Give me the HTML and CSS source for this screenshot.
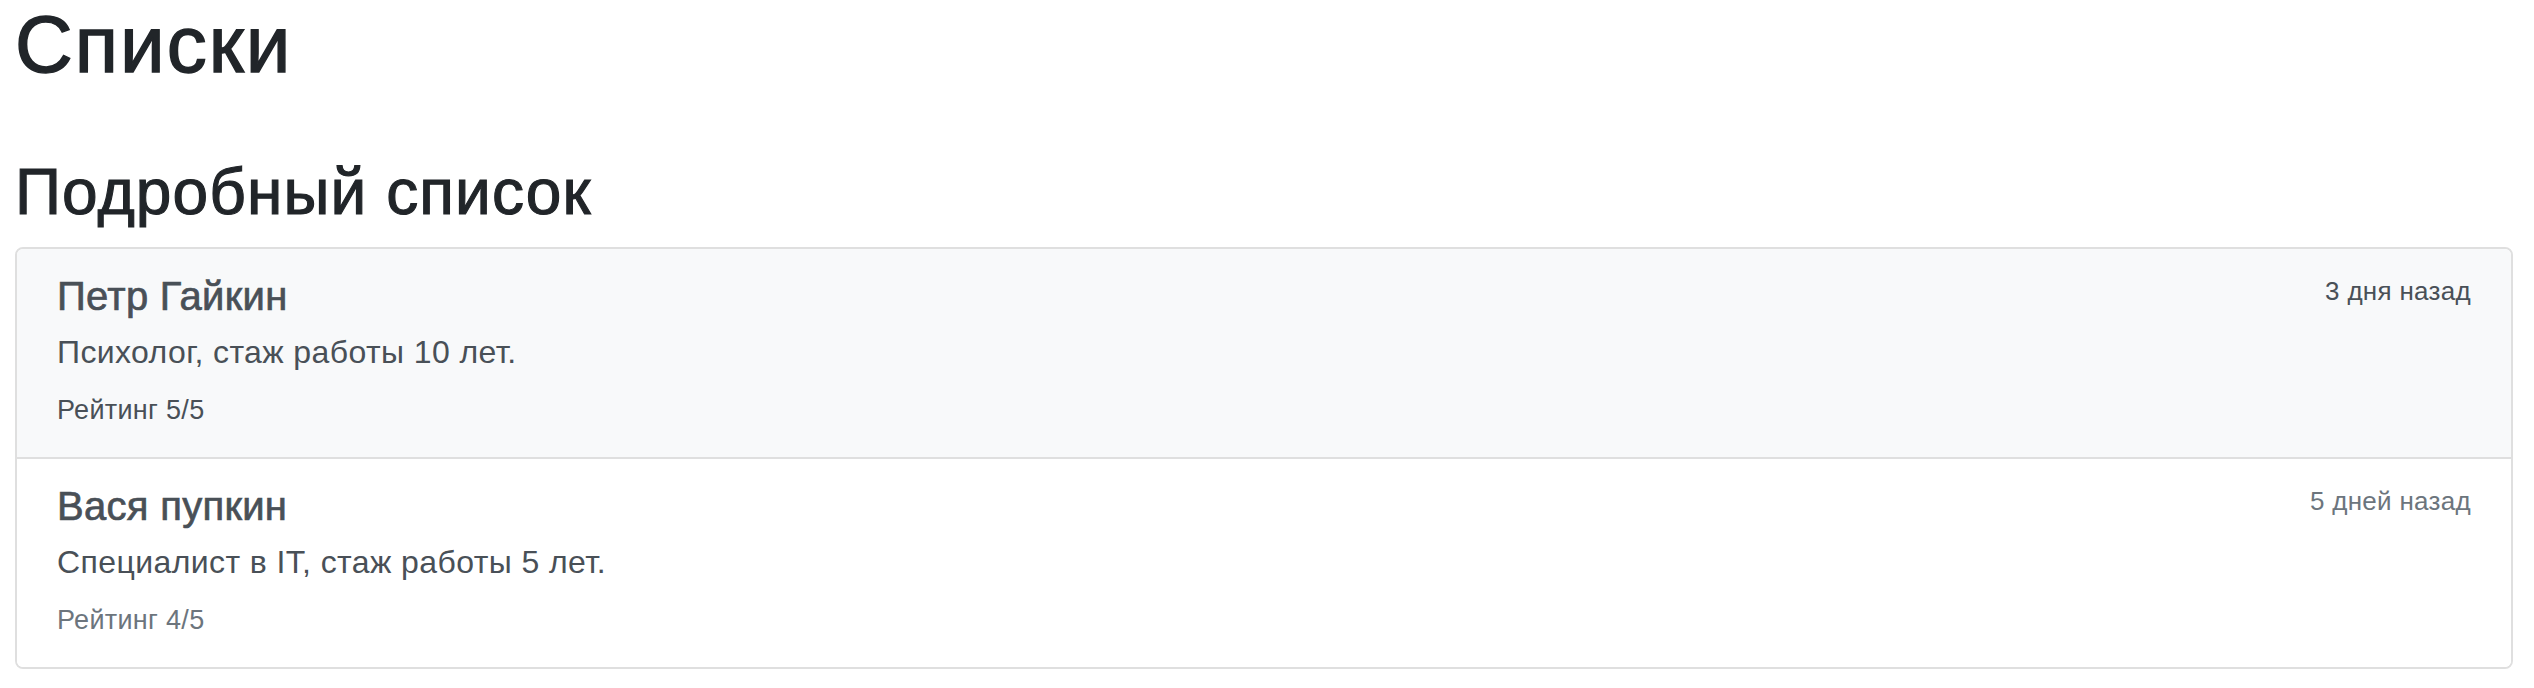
FILE: index.html
```html
<!DOCTYPE html>
<html lang="ru">
<head>
<meta charset="utf-8">
<title>Списки</title>
<link rel="stylesheet" href="styles.css">
</head>
<body>
<h1 class="title">Списки</h1>
<h2 class="subtitle">Подробный список</h2>
<div class="list-group">
  <a href="#" class="list-item list-item-hover">
    <div class="item-head">
      <h5 class="item-name">Петр Гайкин</h5>
      <small class="item-date">3 дня назад</small>
    </div>
    <p class="item-text">Психолог, стаж работы 10 лет.</p>
    <small class="item-rating">Рейтинг 5/5</small>
  </a>
  <a href="#" class="list-item">
    <div class="item-head">
      <h5 class="item-name">Вася пупкин</h5>
      <small class="item-date muted">5 дней назад</small>
    </div>
    <p class="item-text">Специалист в IT, стаж работы 5 лет.</p>
    <small class="item-rating muted">Рейтинг 4/5</small>
  </a>
</div>
</body>
</html>
```

FILE: styles.css
```css
* { box-sizing: border-box; }
html, body { margin: 0; }
body {
  padding: 0 21px 0 15px;
  font-family: "Liberation Sans", Arial, sans-serif;
  font-size: 32px;
  line-height: 1.5;
  color: #212529;
  background: #fff;
}
.title {
  margin: -3px 0 0;
  font-size: 80px;
  line-height: 96px;
  font-weight: 400;
  letter-spacing: 2px;
  -webkit-text-stroke: 1.4px currentColor;
}
.subtitle {
  margin: 61px 0 16px;
  font-size: 64px;
  line-height: 76.8px;
  font-weight: 400;
  letter-spacing: 1.1px;
  -webkit-text-stroke: 1.1px currentColor;
}
.list-group {
  display: flex;
  flex-direction: column;
  border: 2px solid #dfdfdf;
  border-radius: 8px;
  overflow: hidden;
}
.list-item {
  display: block;
  padding: 23px 40px 25px;
  color: #495057;
  text-decoration: none;
  background: #fff;
}
.list-item + .list-item { border-top: 2px solid #dfdfdf; }
.list-item-hover { background: #f8f9fa; }
.item-head {
  display: flex;
  justify-content: space-between;
  align-items: flex-start;
  margin-bottom: 8px;
}
.item-name {
  margin: 0;
  font-size: 40px;
  line-height: 48px;
  font-weight: 400;
  letter-spacing: 0.3px;
  -webkit-text-stroke: 0.7px currentColor;
}
.item-date, .item-rating {
  font-size: 27px;
  letter-spacing: 0.3px;
}
.item-date {
  font-size: 26px;
  line-height: 1.5;
}
.item-text {
  margin: 0 0 8px;
  letter-spacing: 0.4px;
}
.muted { color: #6c757d; }
```
